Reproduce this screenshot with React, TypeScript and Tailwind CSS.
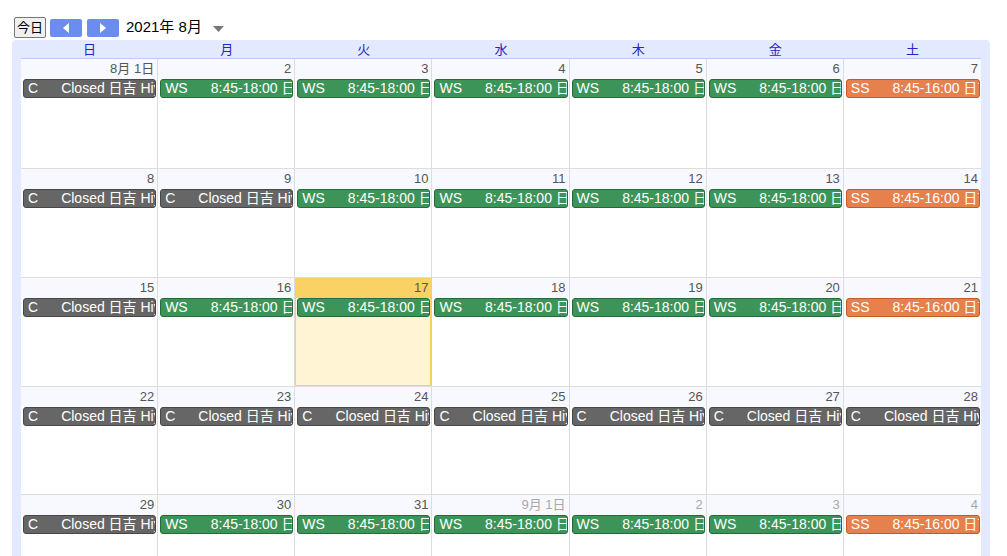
import React from "react";

type Kind = "c" | "ws" | "ss";

type Day = { label: string; other?: boolean; today?: boolean; kind: Kind };

const chip: Record<Kind, { tag: string; text: string; cls: string }> = {
  c: { tag: "C", text: "Closed 日吉 Hiyoshi", cls: "bg-[#666666] border-[#474747]" },
  ws: { tag: "WS", text: "8:45-18:00 日吉 Hiyoshi", cls: "bg-[#3d9458] border-[#236b38]" },
  ss: { tag: "SS", text: "8:45-16:00 日吉 Hiyoshi", cls: "bg-[#e6804c] border-[#c25b26]" },
};

const dayNames = ["日", "月", "火", "水", "木", "金", "土"];

// row heights include the bottom grid line
const rowHeights = ["h-[110px]", "h-[109px]", "h-[109px]", "h-[108px]", "h-[109px]"];

const weekKinds = (sun: Kind, weekday: Kind[], sat: Kind): Kind[] => [sun, ...weekday, sat];

const weeks: Day[][] = [
  weekKinds("c", ["ws", "ws", "ws", "ws", "ws"], "ss").map((kind, i) => ({
    label: i === 0 ? "8月 1日" : String(i + 1),
    kind,
  })),
  weekKinds("c", ["c", "ws", "ws", "ws", "ws"], "ss").map((kind, i) => ({
    label: String(8 + i),
    kind,
  })),
  weekKinds("c", ["ws", "ws", "ws", "ws", "ws"], "ss").map((kind, i) => ({
    label: String(15 + i),
    today: i === 2,
    kind,
  })),
  weekKinds("c", ["c", "c", "c", "c", "c"], "c").map((kind, i) => ({
    label: String(22 + i),
    kind,
  })),
  weekKinds("c", ["ws", "ws", "ws", "ws", "ws"], "ss").map((kind, i) => ({
    label: i < 3 ? String(29 + i) : i === 3 ? "9月 1日" : String(i - 2),
    other: i >= 3,
    kind,
  })),
];

const Chip = ({ kind }: { kind: Kind }) => {
  const c = chip[kind];
  return (
    <div
      className={`ml-[2px] mr-[1px] h-[19px] border rounded-[3px] text-white text-[14px] leading-[17px] whitespace-nowrap overflow-hidden pl-[4px] ${c.cls}`}
    >
      <span>{c.tag}</span>
      <span className="ml-[23px]">{c.text}</span>
    </div>
  );
};

const Cell = ({ day, last }: { day: Day; last: boolean }) => (
  <div
    className={`h-full flex flex-col ${last ? "" : "border-r"} ${
      day.today
        ? "bg-[#fff4d4] border-[#f8cf62] shadow-[inset_0_0_0_1px_#f8cf62]"
        : "bg-white border-[#dddddd]"
    }`}
  >
    <div
      className={`h-[20px] text-right pr-[3px] text-[13px] leading-[20px] ${
        day.today ? "bg-[#fad165]" : "bg-[#f8f9fe]"
      } ${day.other ? "text-[#a8a8a8]" : "text-[#555555]"}`}
    >
      {day.label}
    </div>
    <Chip kind={day.kind} />
  </div>
);

export default function App() {
  return (
    <div
      className="w-[1007px] h-[556px] overflow-hidden bg-white"
      style={{ fontFamily: '"Liberation Sans", Arial, "Noto Sans CJK JP", sans-serif' }}
    >
      <div className="flex items-center h-[40px] pl-[14px] pt-[15px]">
        <button className="h-[21px] w-[32px] border border-[#777] rounded-[2px] bg-[#f0f0f0] text-[13px] leading-[19px] text-black">
          今日
        </button>
        <button className="ml-[4px] h-[18px] w-[32px] rounded-[2px] bg-[#6c8df0] flex items-center justify-center">
          <svg width="6" height="10" viewBox="0 0 6 10">
            <path d="M6 0 L0 5 L6 10 Z" fill="#ffffff" />
          </svg>
        </button>
        <button className="ml-[5px] h-[18px] w-[32px] rounded-[2px] bg-[#6c8df0] flex items-center justify-center">
          <svg width="6" height="10" viewBox="0 0 6 10">
            <path d="M0 0 L6 5 L0 10 Z" fill="#ffffff" />
          </svg>
        </button>
        <span className="ml-[7px] text-[15px] text-black">2021年 8月</span>
        <svg className="ml-[11px] mt-[2px]" width="11" height="6" viewBox="0 0 11 6">
          <path d="M0 0 L11 0 L5.5 6 Z" fill="#777777" />
        </svg>
      </div>
      <div className="ml-[12px] w-[978px] h-[520px] bg-[#e3e9ff] rounded-t-[4px] px-[9px]">
        <div className="grid grid-cols-7 h-[19px] border-b border-[#bccbfa]">
          {dayNames.map((d) => (
            <div key={d} className="text-center text-[13px] leading-[20px] text-[#2424c8]">
              {d}
            </div>
          ))}
        </div>
        <div className="flex flex-col bg-white">
          {weeks.map((week, w) => (
            <div
              key={w}
              className={`grid grid-cols-7 ${rowHeights[w]} ${w < weeks.length - 1 ? "border-b border-[#dddddd]" : ""}`}
            >
              {week.map((day, i) => (
                <Cell key={i} day={day} last={i === 6} />
              ))}
            </div>
          ))}
        </div>
      </div>
    </div>
  );
}
